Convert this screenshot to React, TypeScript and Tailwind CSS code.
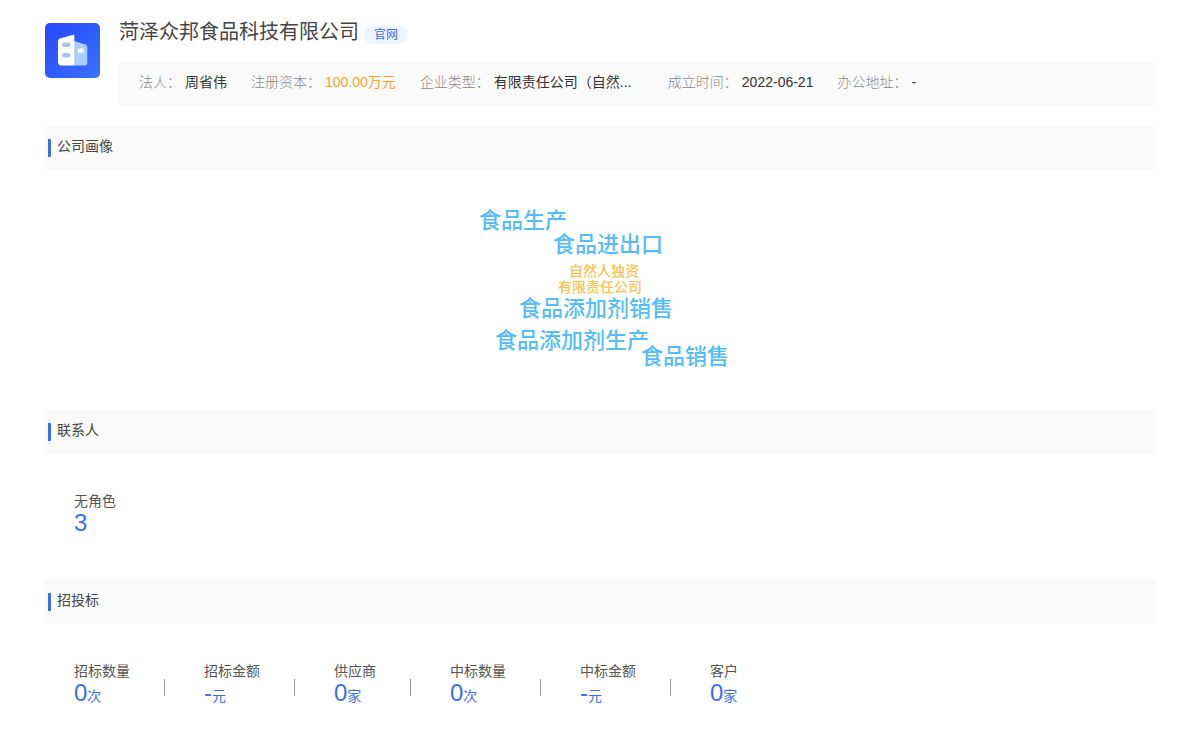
import clsx from 'clsx';

const infoItems = [
  { label: '法人', value: '周省伟' },
  { label: '注册资本', value: '100.00万元', highlight: true },
  { label: '企业类型', value: '有限责任公司（自然...', fixed: true },
  { label: '成立时间', value: '2022-06-21' },
  { label: '办公地址', value: '-' },
];

// Word positions are relative to the centre of the cloud
const words = [
  { text: '食品生产', className: '-ml-[121px] top-[35px] text-[22px] text-[#54bcf8]' },
  { text: '食品进出口', className: '-ml-[47px] top-[59px] text-[22px] text-[#54bcf8]' },
  { text: '自然人独资', className: '-ml-[31px] top-[85px] text-sm text-[#f9c34f]' },
  { text: '有限责任公司', className: '-ml-[42px] top-[101px] text-sm text-[#f9c34f]' },
  { text: '食品添加剂销售', className: '-ml-[81px] top-[123px] text-[22px] text-[#54bcf8]' },
  { text: '食品添加剂生产', className: '-ml-[105px] top-[155px] text-[22px] text-[#54bcf8]' },
  { text: '食品销售', className: 'ml-[41px] top-[171px] text-[22px] text-[#54bcf8]' },
];

const contacts = [{ label: '无角色', value: '3', unit: '' }];

const bids = [
  { label: '招标数量', value: '0', unit: '次' },
  { label: '招标金额', value: '-', unit: '元' },
  { label: '供应商', value: '0', unit: '家' },
  { label: '中标数量', value: '0', unit: '次' },
  { label: '中标金额', value: '-', unit: '元' },
  { label: '客户', value: '0', unit: '家' },
];

type Stat = { label: string; value: string; unit: string };

const CompanyLogo = () => (
  <svg viewBox="0 0 55 55" className="size-[55px] shrink-0" aria-hidden="true">
    <defs>
      <linearGradient id="logo-bg" x1="0" y1="0" x2="1" y2="1">
        <stop offset="0" stopColor="#2647fb" />
        <stop offset="1" stopColor="#3b70fb" />
      </linearGradient>
    </defs>
    <rect width="55" height="55" rx="5" fill="url(#logo-bg)" />
    <path d="M29 18l11.5 3.6q1.8.6 1.8 2.4v15.500q0 3-3 3H29z" fill="#a9cefd" />
    <path d="M15 15.500l14.300-3.900V42.500H16q-3-.3-3-3.200V18.200q0-2.200 2-2.700z" fill="#fff" />
    <rect x="17" y="19.500" width="8.500" height="4.600" rx="2.300" fill="#a5c3f6" />
    <rect x="17" y="30" width="8.500" height="4.600" rx="2.300" fill="#a5c3f6" />
    <rect x="32.500" y="25.500" width="6.500" height="4.400" rx="2.200" fill="#fff" />
  </svg>
);

const SectionTitle = ({ children }: { children: string }) => (
  <div className="flex h-11 items-center bg-[#fafafa] px-1">
    <h2 className="flex items-center text-sm leading-5 text-[#444]">
      <span className="mr-1.5 h-[18px] w-[3px] bg-[#3a6fe8]" />
      <span className="pb-1">{children}</span>
    </h2>
  </div>
);

const StatList = ({ items }: { items: Stat[] }) => (
  <ul className="flex flex-wrap px-[30px] pt-9 pb-[46px]">
    {items.map((item, index) => (
      <li key={item.label} className="flex items-center">
        {index > 0 && <span className="mt-2.5 mr-[39px] ml-[34px] h-[17px] w-px bg-[#999]" />}
        <div>
          <p className="text-sm leading-[22px] text-[#555]">{item.label}</p>
          <p className="text-2xl leading-[22px] text-[#3a6fe8]">
            {item.value}
            <span className="text-sm leading-none">{item.unit}</span>
          </p>
        </div>
      </li>
    ))}
  </ul>
);

const App = () => {
  return (
    <main
      lang="zh-CN"
      className="bg-white px-11 font-['Liberation_Sans','Noto_Sans_CJK_SC',sans-serif]"
    >
      <header className="flex gap-[19px] pt-[23px] pl-px">
        <CompanyLogo />
        <div className="min-w-0 flex-1">
          <div className="-mt-[5px] flex items-center gap-[5px]">
            <h1 className="text-xl leading-7 text-[#444]">菏泽众邦食品科技有限公司</h1>
            <a href="#" className="mt-1.5 rounded-full bg-[#eef3fe] px-2.5 text-xs leading-[18px] text-[#3a6fe8]">
              官网
            </a>
          </div>
          <dl className="mt-4 flex flex-wrap gap-x-6 bg-[#fafafa] px-5 pt-2.5 pb-3.5 text-sm leading-5">
            {infoItems.map((item) => (
              <div key={item.label} className="flex gap-1">
                <dt className="font-light text-[#888]">{item.label}：</dt>
                <dd
                  className={clsx(
                    item.highlight ? 'text-[#f0a62f]' : 'text-[#333]',
                    item.fixed && 'w-[150px]',
                  )}
                >
                  {item.value}
                </dd>
              </div>
            ))}
          </dl>
        </div>
      </header>

      <section className="mt-5">
        <SectionTitle>公司画像</SectionTitle>
        <div className="relative h-60">
          {words.map((word) => (
            <span
              key={word.text}
              className={clsx('absolute left-1/2 leading-8 font-medium whitespace-nowrap', word.className)}
            >
              {word.text}
            </span>
          ))}
        </div>
      </section>

      <section>
        <SectionTitle>联系人</SectionTitle>
        <StatList items={contacts} />
      </section>

      <section>
        <SectionTitle>招投标</SectionTitle>
        <StatList items={bids} />
      </section>
    </main>
  );
};

export default App;
